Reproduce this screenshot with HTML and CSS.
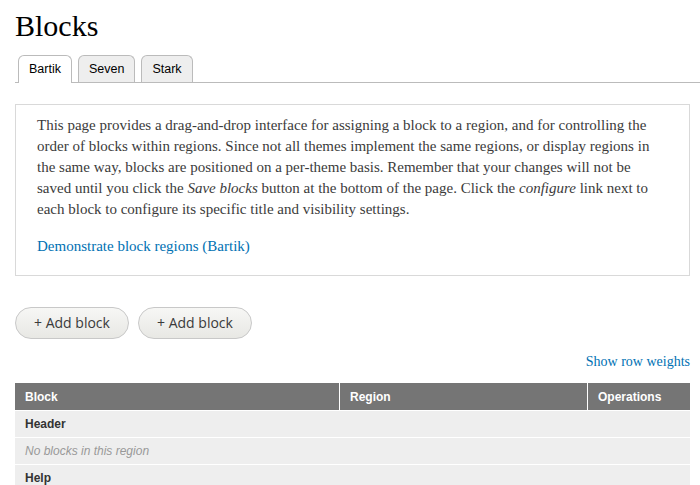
FILE: index.html
```
<!DOCTYPE html>
<html lang="en">
<head>
    <meta charset="UTF-8">
    <title>Blocks</title>
    <link rel="stylesheet" href="styles.css">
</head>
<body>
    <h1 class="page-title">Blocks</h1>
    <ul class="tabs">
        <li class="active"><a href="#">Bartik</a></li>
        <li><a href="#">Seven</a></li>
        <li><a href="#">Stark</a></li>
    </ul>

    <div class="help">
        <p>This page provides a drag-and-drop interface for assigning a block to a region, and for controlling the order of blocks within regions. Since not all themes implement the same regions, or display regions in the same way, blocks are positioned on a per-theme basis. Remember that your changes will not be saved until you click the <em>Save blocks</em> button at the bottom of the page. Click the <em>configure</em> link next to each block to configure its specific title and visibility settings.</p>
        <p><a href="#">Demonstrate block regions (Bartik)</a></p>
    </div>

    <div class="actions">
        <a class="button" href="#">+ Add block</a>
        <a class="button" href="#">+ Add block</a>
    </div>

    <div class="weights"><a href="#">Show row weights</a></div>

    <table class="blocks">
        <thead>
            <tr>
                <th class="col-block">Block</th>
                <th class="col-region">Region</th>
                <th>Operations</th>
            </tr>
        </thead>
        <tbody>
            <tr class="region-title"><td colspan="3">Header</td></tr>
            <tr class="region-empty"><td colspan="3">No blocks in this region</td></tr>
            <tr class="region-title"><td colspan="3">Help</td></tr>
        </tbody>
    </table>
</body>
</html>
```

FILE: styles.css
```
body {
    margin: 0;
    padding: 0 10px 0 15px;
    font-family: "Liberation Serif", Georgia, serif;
    font-size: 15px;
    color: #3b3b3b;
    background: white;
}

a {
    color: #0071b3;
    text-decoration: none;
}

.page-title {
    margin: 0;
    padding-top: 9px;
    font-size: 30px;
    font-weight: normal;
    line-height: 34px;
    color: black;
}

.tabs {
    display: flex;
    gap: 6px;
    list-style: none;
    margin: 12px -10px 0 0;
    padding: 0 0 0 3px;
    border-bottom: 1px solid #bbbbbb;
}

.tabs li {
    margin-bottom: -1px;
}

.tabs a {
    display: block;
    padding: 0 10px;
    height: 26px;
    line-height: 26px;
    font-family: "Liberation Sans", Arial, sans-serif;
    font-size: 12.5px;
    color: #000;
    background: #eeeeee;
    border: 1px solid #bbbbbb;
    border-bottom: none;
    border-radius: 6px 6px 0 0;
}

.tabs li.active a {
    background: white;
    height: 27px;
}

.help {
    margin-top: 21px;
    border: 1px solid #d9d9d9;
    padding: 10px 21px 18px;
}

.help p {
    margin: 0 0 16px;
    line-height: 21px;
}

.help p:last-child {
    margin-bottom: 0;
}

.actions {
    display: flex;
    gap: 9px;
    margin-top: 31px;
}

.button {
    display: block;
    width: 112px;
    height: 30px;
    line-height: 30px;
    text-align: center;
    font-family: "Open Sans", sans-serif;
    font-size: 14px;
    color: #3a3a3a;
    border: 1px solid #c8c8c8;
    border-radius: 16px;
    background: linear-gradient(#f7f7f5, #e8e8e4);
}

.weights {
    margin-top: 13px;
    text-align: right;
    line-height: 20px;
    font-size: 14px;
}

.blocks {
    width: 100%;
    margin-top: 11px;
    border-collapse: collapse;
    font-family: "Liberation Sans", Arial, sans-serif;
    font-size: 12px;
}

.blocks th {
    background: #757575;
    color: white;
    text-align: left;
    height: 27px;
    padding: 0 10px;
    border-right: 1px solid white;
}

.blocks th:last-child {
    border-right: none;
}

.col-block {
    width: 304px;
}

.col-region {
    width: 227px;
}

.blocks td {
    background: #eeeeee;
    height: 26px;
    padding: 0 10px;
    border-top: 1px solid white;
}

.region-title td {
    font-weight: bold;
    color: #333;
}

.region-empty td {
    font-style: italic;
    color: #999;
}
```
